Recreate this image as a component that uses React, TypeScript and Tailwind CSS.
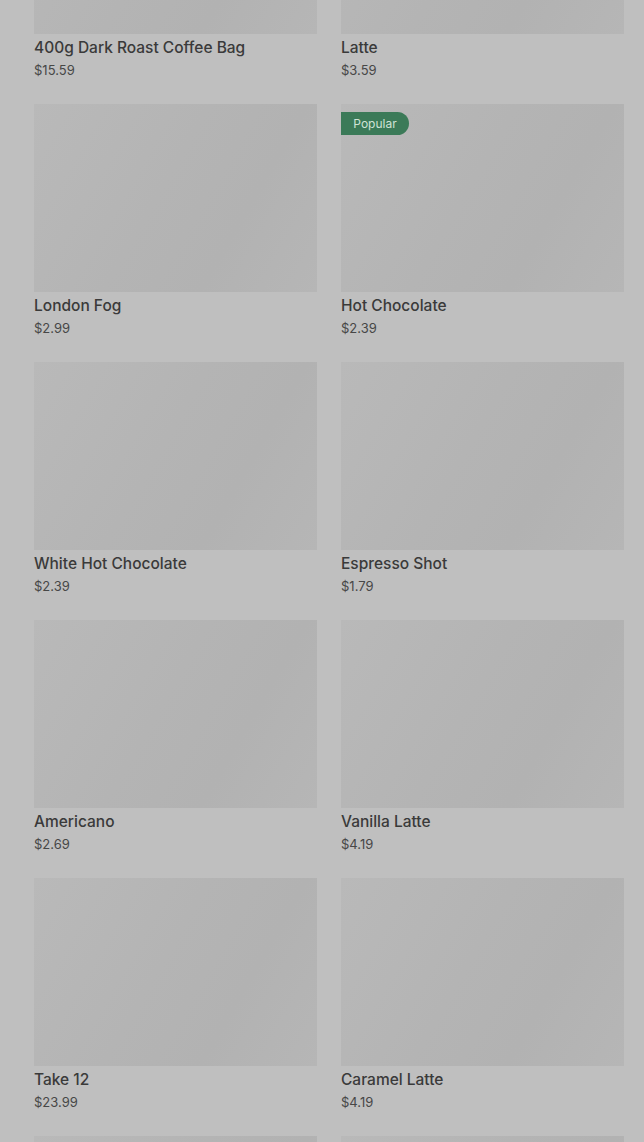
import React from 'react';

interface Product {
  name?: string;
  price?: string;
  popular?: boolean;
}

const PRODUCTS: Product[] = [
  { name: '400g Dark Roast Coffee Bag', price: '$15.59' },
  { name: 'Latte', price: '$3.59' },
  { name: 'London Fog', price: '$2.99' },
  { name: 'Hot Chocolate', price: '$2.39', popular: true },
  { name: 'White Hot Chocolate', price: '$2.39' },
  { name: 'Espresso Shot', price: '$1.79' },
  { name: 'Americano', price: '$2.69' },
  { name: 'Vanilla Latte', price: '$4.19' },
  { name: 'Take 12', price: '$23.99' },
  { name: 'Caramel Latte', price: '$4.19' },
  // next row only peeks in at the bottom edge
  {},
  {},
];

const ProductCard: React.FC<{ product: Product }> = ({ product }) => (
  <div className="flex flex-col">
    <div className="relative h-[188px] bg-[linear-gradient(120deg,#b9b9b9_0%,#b4b4b4_45%,#b2b2b2_70%,#b6b6b6_100%)]">
      {product.popular && (
        <span className="absolute left-0 top-2 flex h-[23px] w-[68px] items-center justify-center rounded-r-full bg-[#3b7a58] text-[12px] text-[#cfe3d6]">
          Popular
        </span>
      )}
    </div>
    {product.name && (
      <>
        <div className="mt-[2px] text-[15.5px] leading-6 font-medium text-[#3a3a3a]">{product.name}</div>
        <div className="text-[13px] leading-5 text-[#474747]">{product.price}</div>
      </>
    )}
  </div>
);

export default function App() {
  return (
    <div className="h-[1142px] overflow-hidden bg-[#bfbfbf] font-['Inter',sans-serif]">
      <div className="-mt-[154px] grid grid-cols-2 gap-x-6 gap-y-6 pl-[34px] pr-[20px]">
        {PRODUCTS.map((p, i) => (
          <ProductCard key={i} product={p} />
        ))}
      </div>
    </div>
  );
}
